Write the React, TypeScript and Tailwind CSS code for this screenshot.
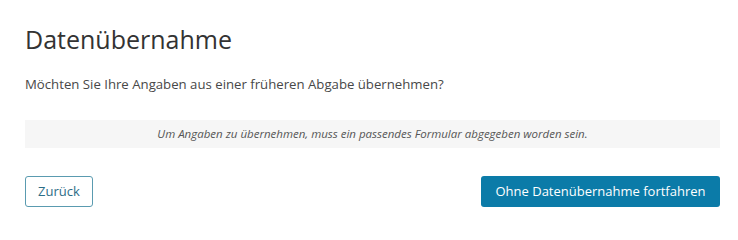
export default function App() {
  return (
    <div className="w-[738px] h-[232px] bg-white pl-[25px] pr-[18px] pt-[23px] font-['Open_Sans',sans-serif]">
      <h1 className="text-[25px] leading-[32px] text-[#333333] font-normal">Datenübernahme</h1>
      <p className="mt-[19px] text-[13.2px] leading-[20px] text-[#484848]">
        Möchten Sie Ihre Angaben aus einer früheren Abgabe übernehmen?
      </p>
      <div className="mt-[26px] h-[28px] bg-[#f6f6f6] flex items-center justify-center">
        <span className="text-[11.5px] italic text-[#555555]">
          Um Angaben zu übernehmen, muss ein passendes Formular abgegeben worden sein.
        </span>
      </div>
      <div className="mt-[28px] flex justify-between">
        <button className="h-[31px] px-[12px] rounded-[3px] border border-[#5a9bb0] text-[13px] text-[#2d6d87] bg-white">
          Zurück
        </button>
        <button className="h-[31px] w-[239px] rounded-[3px] bg-[#0b7ba8] text-[13px] text-white">
          Ohne Datenübernahme fortfahren
        </button>
      </div>
    </div>
  );
}
